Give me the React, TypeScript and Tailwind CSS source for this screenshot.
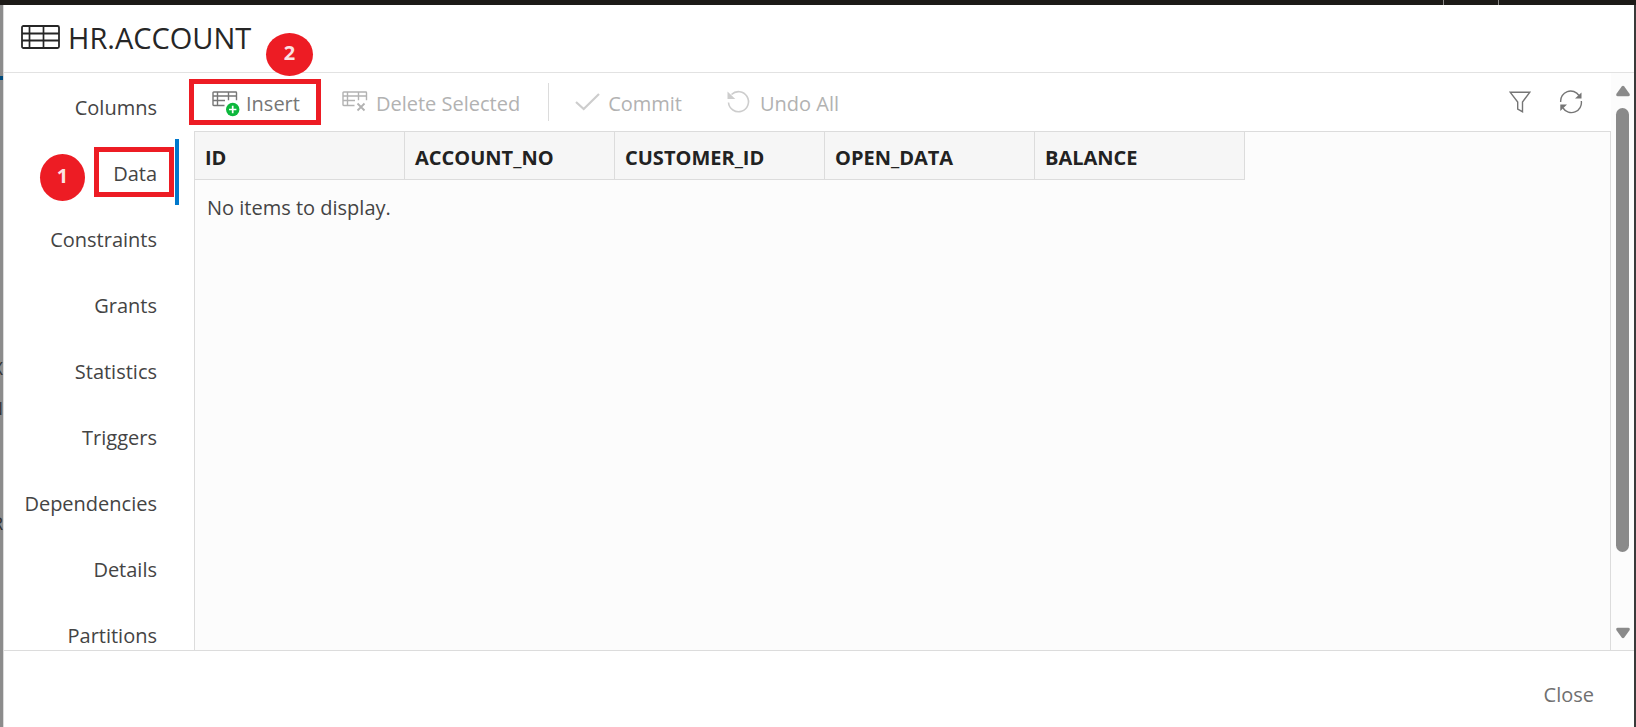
import type { ReactNode } from 'react';

const tabs = ['Columns', 'Data', 'Constraints', 'Grants', 'Statistics', 'Triggers', 'Dependencies', 'Details', 'Partitions'];
const columns = ['ID', 'ACCOUNT_NO', 'CUSTOMER_ID', 'OPEN_DATA', 'BALANCE'];

function TableIcon() {
  return (
    <svg width="39" height="26" viewBox="0 0 39 26" fill="none" stroke="#262626" aria-hidden="true">
      <rect x="1" y="1" width="37" height="22" rx="1.5" strokeWidth="1.8" />
      <path d="M1 8.500h37M1 15.500h37" strokeWidth="2" />
      <path d="M8.500 1v22M22.500 1v22" strokeWidth="1.700" />
    </svg>
  );
}

function GridGlyph({ children }: { children: ReactNode }) {
  return (
    <svg className="overflow-visible" width="26" height="26" viewBox="0 -1 26 26" fill="none" stroke="currentColor" aria-hidden="true">
      <path
        d="M12.500 15.500H1.700a.7.7 0 0 1-.7-.7V2.700A.7.7 0 0 1 1.700 2H23.800a.7.700 0 0 1 .7.700V10.300M1 6h23.500M1 10.500h12M5.500 2v13.500M16.500 2v8.300"
        strokeWidth="1.400"
      />
      {children}
    </svg>
  );
}

function ToolButton({ icon, label, disabled, children }: { icon: ReactNode; label: string; disabled?: boolean; children?: ReactNode }) {
  return (
    <button type="button" disabled={disabled} className="relative flex h-9 items-center gap-2 whitespace-nowrap text-[#767676] disabled:text-[#b2b2b2]">
      {icon}
      <span className="pt-1">{label}</span>
      {children}
    </button>
  );
}

function Step({ n }: { n: number }) {
  return <span className="flex h-full w-full items-center justify-center rounded-[50%] bg-[#ed1c24] pb-1 text-[20px] leading-none font-bold text-[#fbe3e4]">{n}</span>;
}

function InsertIcon() {
  return (
    <GridGlyph>
      <circle cx="20.700" cy="19.500" r="6.700" fill="#0cb83c" stroke="none" />
      <path d="M20.700 15.800v7.400M17 19.500h7.400" stroke="#fff" strokeWidth="1.700" />
    </GridGlyph>
  );
}

function DeleteIcon() {
  return (
    <GridGlyph>
      <path d="M15.500 13.500l7 7M22.500 13.500l-7 7" strokeWidth="1.800" />
    </GridGlyph>
  );
}

function CheckIcon() {
  return (
    <svg width="25" height="22" viewBox="0 0 25 22" fill="none" stroke="#cdcdcd" strokeWidth="2.200" aria-hidden="true">
      <path d="M1 11l7.700 7L24 3" />
    </svg>
  );
}

function UndoIcon() {
  return (
    <svg width="26" height="26" viewBox="-1 -1 26 26" fill="none" aria-hidden="true">
      <path d="M4.500 4.500A10 10 0 1 1 1.500 12.500" stroke="#cdcdcd" strokeWidth="1.600" />
      <path d="M.5 1.500v7.500h7.800z" fill="#cdcdcd" />
    </svg>
  );
}

function FilterIcon() {
  return (
    <svg width="22" height="22" viewBox="0 0 22 22" fill="none" stroke="#757575" strokeWidth="1.400" aria-hidden="true">
      <path d="M1.300 1.300h19.400L13.500 11v9.700L8.700 18v-7z" />
    </svg>
  );
}

function RefreshIcon() {
  return (
    <svg width="24" height="24" viewBox="0 0 24 24" fill="none" aria-hidden="true">
      <path d="M1.700 12A10 10 0 0 1 20 5.500M22.300 11A10 10 0 0 1 4 18" stroke="#757575" strokeWidth="1.400" />
      <path d="M22.500 2.500v6h-6.500zM1.300 21v-6.500h6.700z" fill="#757575" />
    </svg>
  );
}

export default function App() {
  return (
    <div className="flex h-screen flex-col overflow-hidden bg-[#8c8c8c] font-['Open_Sans','Noto_Sans',sans-serif] text-[20px] leading-7 text-[#444]">
      <div className="flex h-[5px] shrink-0 justify-end gap-[54px] bg-[#1c1a17] pr-[137px]">
        <span className="w-px bg-[#8a8886]" />
        <span className="w-px bg-[#8a8886]" />
      </div>
      <div className="flex min-h-0 flex-1">
        <div className="flex w-[3px] shrink-0 flex-col items-end overflow-hidden pt-[71px] text-[18px] text-[#333]">
          <div className="h-1 w-full shrink-0 bg-[#004a7c]" />
          <span className="mt-[274px]">X</span>
          <span className="mt-3">N</span>
          <span className="mt-[87px]">R</span>
        </div>
        <main className="flex min-w-0 flex-1 flex-col border-l border-[#dcdcdc] bg-white">
          <header className="flex h-[68px] shrink-0 items-center gap-2 border-b border-[#e2e2e2] pb-0.5 pl-[17px]">
            <TableIcon />
            <h1 className="text-[29px] text-[#262626]">HR.ACCOUNT</h1>
          </header>
          <div className="flex min-h-0 flex-1">
            <nav className="flex w-[190px] shrink-0 flex-col overflow-hidden" aria-label="Table properties">
              {tabs.map((tab) => (
                <button
                  key={tab}
                  type="button"
                  className={
                    tab === 'Data'
                      ? 'relative mr-[15px] flex h-[66px] shrink-0 items-center justify-end border-r-4 border-[#0078cc] pt-1 pr-[18px]'
                      : 'mr-[15px] flex h-[66px] shrink-0 items-center justify-end pt-1 pr-[22px]'
                  }
                >
                  {tab}
                  {tab === 'Data' && (
                    <>
                      <span className="absolute top-2 right-px h-[50px] w-20 border-[5px] border-[#ed1c24]" />
                      <span className="absolute top-[15px] left-9 h-[47px] w-[45px]">
                        <Step n={1} />
                      </span>
                    </>
                  )}
                </button>
              ))}
            </nav>
            <section className="flex min-w-0 flex-1 flex-col">
              <div className="flex h-[58px] shrink-0 items-center pl-[18px]">
                <ToolButton icon={<InsertIcon />} label="Insert">
                  <span className="absolute -top-[5px] -right-[21px] -left-[23px] h-[46px] border-[5px] border-[#ed1c24]" />
                  <span className="absolute -top-[51px] left-[54px] h-[43px] w-[47px]">
                    <Step n={2} />
                  </span>
                </ToolButton>
                <div className="w-[42px]" />
                <ToolButton icon={<DeleteIcon />} label="Delete Selected" disabled />
                <div className="mr-[26px] ml-7 h-[38px] w-px bg-[#dcdcdc]" />
                <ToolButton icon={<CheckIcon />} label="Commit" disabled />
                <div className="w-11" />
                <ToolButton icon={<UndoIcon />} label="Undo All" disabled />
                <div className="mr-7 ml-auto flex items-center gap-7">
                  <button type="button" aria-label="Filter">
                    <FilterIcon />
                  </button>
                  <button type="button" aria-label="Refresh">
                    <RefreshIcon />
                  </button>
                </div>
              </div>
              <div className="min-h-0 flex-1 border-x border-t border-[#dcdcdc] bg-[#fcfcfc]">
                <table className="w-[1050px] table-fixed border-separate border-spacing-0 text-left">
                  <thead>
                    <tr>
                      {columns.map((c) => (
                        <th key={c} scope="col" className="h-12 border-r border-b border-[#dcdcdc] bg-[#f6f6f6] pt-1 pl-2.5 font-bold text-[#222]">
                          {c}
                        </th>
                      ))}
                    </tr>
                  </thead>
                  <tbody>
                    <tr>
                      <td colSpan={5} className="h-14 pl-3">
                        No items to display.
                      </td>
                    </tr>
                  </tbody>
                </table>
              </div>
            </section>
            <div className="flex w-[23px] shrink-0 flex-col items-center bg-[#fcfcfc] pt-3 pb-[11px]">
              <svg width="16" height="12" viewBox="0 0 16 12" fill="#8a8a8a" aria-hidden="true">
                <path d="M6.700 1.500Q8 0 9.300 1.500L14.700 9Q15.500 11 13.500 11.300H2.500Q.5 11 1.300 9z" />
              </svg>
              <div className="mt-[11px] mb-[75px] w-[13px] flex-1 rounded-full bg-[#8a8a8a]" />
              <svg width="16" height="12" viewBox="0 0 16 12" fill="#8a8a8a" aria-hidden="true">
                <path d="M6.700 10.500Q8 12 9.300 10.500L14.700 3Q15.500 1 13.500 .7H2.500Q.5 1 1.300 3z" />
              </svg>
            </div>
          </div>
          <footer className="flex h-[77px] shrink-0 justify-end border-t border-[#dcdcdc] pt-4 pr-10">
            <button type="button" className="h-14 text-[#707070]">
              Close
            </button>
          </footer>
        </main>
        <div className="w-0.5 shrink-0 bg-[#3a3a3a]" />
      </div>
    </div>
  );
}
